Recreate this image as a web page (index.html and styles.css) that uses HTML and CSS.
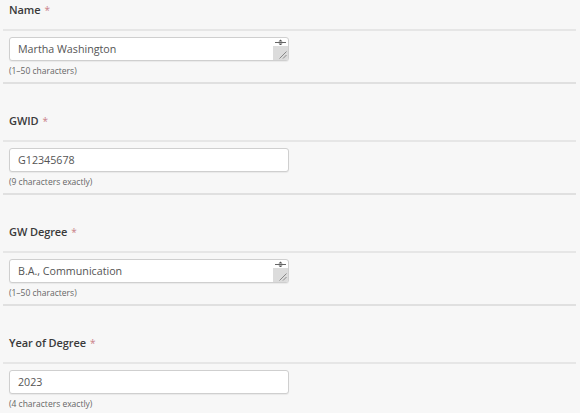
FILE: index.html
```html
<!DOCTYPE html>
<html lang="en">
<head>
<meta charset="utf-8">
<title>Form</title>
<link rel="stylesheet" href="styles.css">
</head>
<body>
<div class="form">
  <div class="field">
    <div class="field-head"><span class="label">Name</span><span class="req">*</span></div>
    <div class="field-body">
      <div class="input area">
        <span class="value">Martha Washington</span>
        <span class="scroll">
          <svg class="arrows" width="13" height="6" viewBox="0 0 13 6"><path d="M1 3.5h11" stroke="#666" stroke-width="1"/><path d="M4.5 2.5l2-2 2 2z M4.5 4.5l2 2 2-2z" fill="#555"/></svg>
          <span class="track"><svg class="grip" width="9" height="9" viewBox="0 0 9 9"><path d="M8.5 1.5l-7 7M8.5 5l-3.5 3.5" stroke="#888" stroke-width="1"/></svg></span>
        </span>
      </div>
      <div class="hint">(1–50 characters)</div>
    </div>
  </div>
  <div class="field">
    <div class="field-head"><span class="label">GWID</span><span class="req">*</span></div>
    <div class="field-body">
      <div class="input"><span class="value">G12345678</span></div>
      <div class="hint">(9 characters exactly)</div>
    </div>
  </div>
  <div class="field">
    <div class="field-head"><span class="label">GW Degree</span><span class="req">*</span></div>
    <div class="field-body">
      <div class="input area">
        <span class="value">B.A., Communication</span>
        <span class="scroll">
          <svg class="arrows" width="13" height="6" viewBox="0 0 13 6"><path d="M1 3.5h11" stroke="#666" stroke-width="1"/><path d="M4.5 2.5l2-2 2 2z M4.5 4.5l2 2 2-2z" fill="#555"/></svg>
          <span class="track"><svg class="grip" width="9" height="9" viewBox="0 0 9 9"><path d="M8.5 1.5l-7 7M8.5 5l-3.5 3.5" stroke="#888" stroke-width="1"/></svg></span>
        </span>
      </div>
      <div class="hint">(1–50 characters)</div>
    </div>
  </div>
  <div class="field">
    <div class="field-head"><span class="label">Year of Degree</span><span class="req">*</span></div>
    <div class="field-body">
      <div class="input"><span class="value">2023</span></div>
      <div class="hint">(4 characters exactly)</div>
    </div>
  </div>
</div>
</body>
</html>
```
FILE: styles.css
```css
html, body {
  margin: 0;
  padding: 0;
  background: #f7f7f7;
  overflow: hidden;
}
body {
  font-family: "Open Sans", "Noto Sans", sans-serif;
  color: #333;
}
.form {
  margin: -27px 4px 0 3px;
}
.field-head {
  height: 58px;
  box-sizing: border-box;
  padding: 27px 0 0 6px;
  line-height: 16px;
  border-bottom: 2px solid #e6e6e6;
}
.label {
  font-size: 11px;
  font-weight: 600;
  color: #3a3a3a;
  letter-spacing: -0.1px;
}
.req {
  margin-left: 4px;
  font-size: 10px;
  color: #c98088;
}
.field-body {
  height: 53px;
  box-sizing: border-box;
  padding: 6px 0 0 6px;
  border-bottom: 2px solid #e0e0e0;
}
.input {
  width: 280px;
  height: 24px;
  box-sizing: border-box;
  background: #fff;
  border: 1px solid #cfcfcf;
  border-radius: 3px;
  box-shadow: 0 1px 1px rgba(0,0,0,0.06);
  display: flex;
  align-items: stretch;
  overflow: hidden;
}
.value {
  flex: 1;
  padding-left: 8px;
  font-size: 10.7px;
  line-height: 22px;
  color: #555;
  white-space: nowrap;
}
.scroll {
  width: 15px;
  display: flex;
  flex-direction: column;
}
.arrows {
  display: block;
  margin: 1px 0 0 1px;
  flex: none;
}
.track {
  flex: 1;
  margin-top: 1px;
  background: #dcdcdc;
  display: flex;
  justify-content: flex-end;
  align-items: flex-end;
}
.grip {
  display: block;
  margin: 0 1px 1px 0;
}
.hint {
  margin-top: 4px;
  font-size: 8.5px;
  line-height: 12px;
  color: #666;
}
```
